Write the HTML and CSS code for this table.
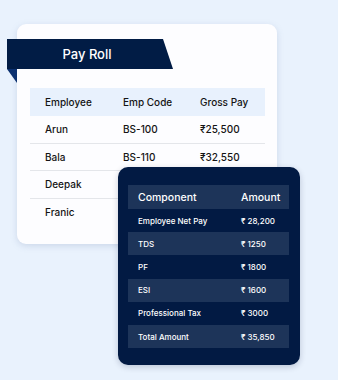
FILE: index.html
```html
<!DOCTYPE html>
<html>
<head>
<meta charset="utf-8">
<link rel="stylesheet" href="styles.css">
</head>
<body>
<div class="stage">
  <div class="card">
    <div class="ribbon"><span>Pay Roll</span></div>
    <div class="ptable">
      <div class="prow phead"><span>Employee</span><span>Emp Code</span><span>Gross Pay</span></div>
      <div class="prow"><span>Arun</span><span>BS-100</span><span>₹25,500</span></div>
      <div class="prow"><span>Bala</span><span>BS-110</span><span>₹32,550</span></div>
      <div class="prow"><span>Deepak</span><span></span><span></span></div>
      <div class="prow last"><span>Franic</span><span></span><span></span></div>
    </div>
  </div>
  <div class="dark">
    <div class="dtable">
      <div class="drow dhead"><span>Component</span><span>Amount</span></div>
      <div class="drow"><span>Employee Net Pay</span><span>₹ 28,200</span></div>
      <div class="drow alt"><span>TDS</span><span>₹ 1250</span></div>
      <div class="drow"><span>PF</span><span>₹ 1800</span></div>
      <div class="drow alt"><span>ESI</span><span>₹ 1600</span></div>
      <div class="drow"><span>Professional Tax</span><span>₹ 3000</span></div>
      <div class="drow alt"><span>Total Amount</span><span>₹ 35,850</span></div>
    </div>
  </div>
</div>
</body>
</html>
```
FILE: styles.css
```css
* { box-sizing: border-box; }
html, body { margin: 0; padding: 0; }
body {
  background: #e9f2fd;
  font-family: Inter, "Noto Sans", sans-serif;
  width: 338px;
  height: 380px;
  overflow: hidden;
}
.stage {
  position: relative;
  width: 338px;
  height: 380px;
  padding: 24px 0 0 17px;
}
.card {
  position: relative;
  width: 260px;
  height: 220px;
  background: #fdfdff;
  border-radius: 9px;
  box-shadow: 0 2px 6px rgba(120, 140, 180, 0.25);
  padding: 15px 12px 0 13px;
}
.ribbon {
  margin-left: -23px;
  width: 166px;
  height: 30px;
  background: #011c45;
  clip-path: polygon(0 0, 156px 0, 100% 100%, 0 100%);
  color: #fff;
  font-size: 13px;
  font-weight: 500;
  display: flex;
  align-items: center;
  justify-content: center;
  padding-right: 6px;
}
.card::before {
  content: "";
  position: absolute;
  left: -10px;
  top: 45px;
  width: 10px;
  height: 14px;
  background: #0c3170;
  clip-path: polygon(0 0, 100% 0, 100% 100%);
}
.ptable {
  margin-top: 19px;
  width: 235px;
}
.prow {
  display: grid;
  grid-template-columns: 78px 77px 1fr;
  padding-left: 15px;
  height: 27.5px;
  align-items: center;
  font-size: 10px;
  font-weight: 500;
  color: #141414;
  border-bottom: 1px solid #e4e6ea;
}
.prow.phead {
  height: 28px;
  background: #e8f1fd;
  border-bottom: none;
}
.prow.last { border-bottom: none; }
.dark {
  position: absolute;
  left: 118px;
  top: 167px;
  width: 182px;
  height: 198px;
  background: #021a43;
  border-radius: 10px;
  padding: 18px 11px 0 10px;
  box-shadow: 0 2px 6px rgba(0, 20, 60, 0.2);
}
.dtable { width: 161px; }
.drow {
  display: grid;
  grid-template-columns: 103px 1fr;
  padding-left: 10px;
  height: 23.2px;
  align-items: center;
  color: #fff;
  font-size: 8px;
  font-weight: 500;
}
.drow.dhead {
  height: 24px;
  font-size: 10.5px;
  font-weight: 500;
  background: #1d3459;
}
.drow.alt { background: #1d3459; }
```
